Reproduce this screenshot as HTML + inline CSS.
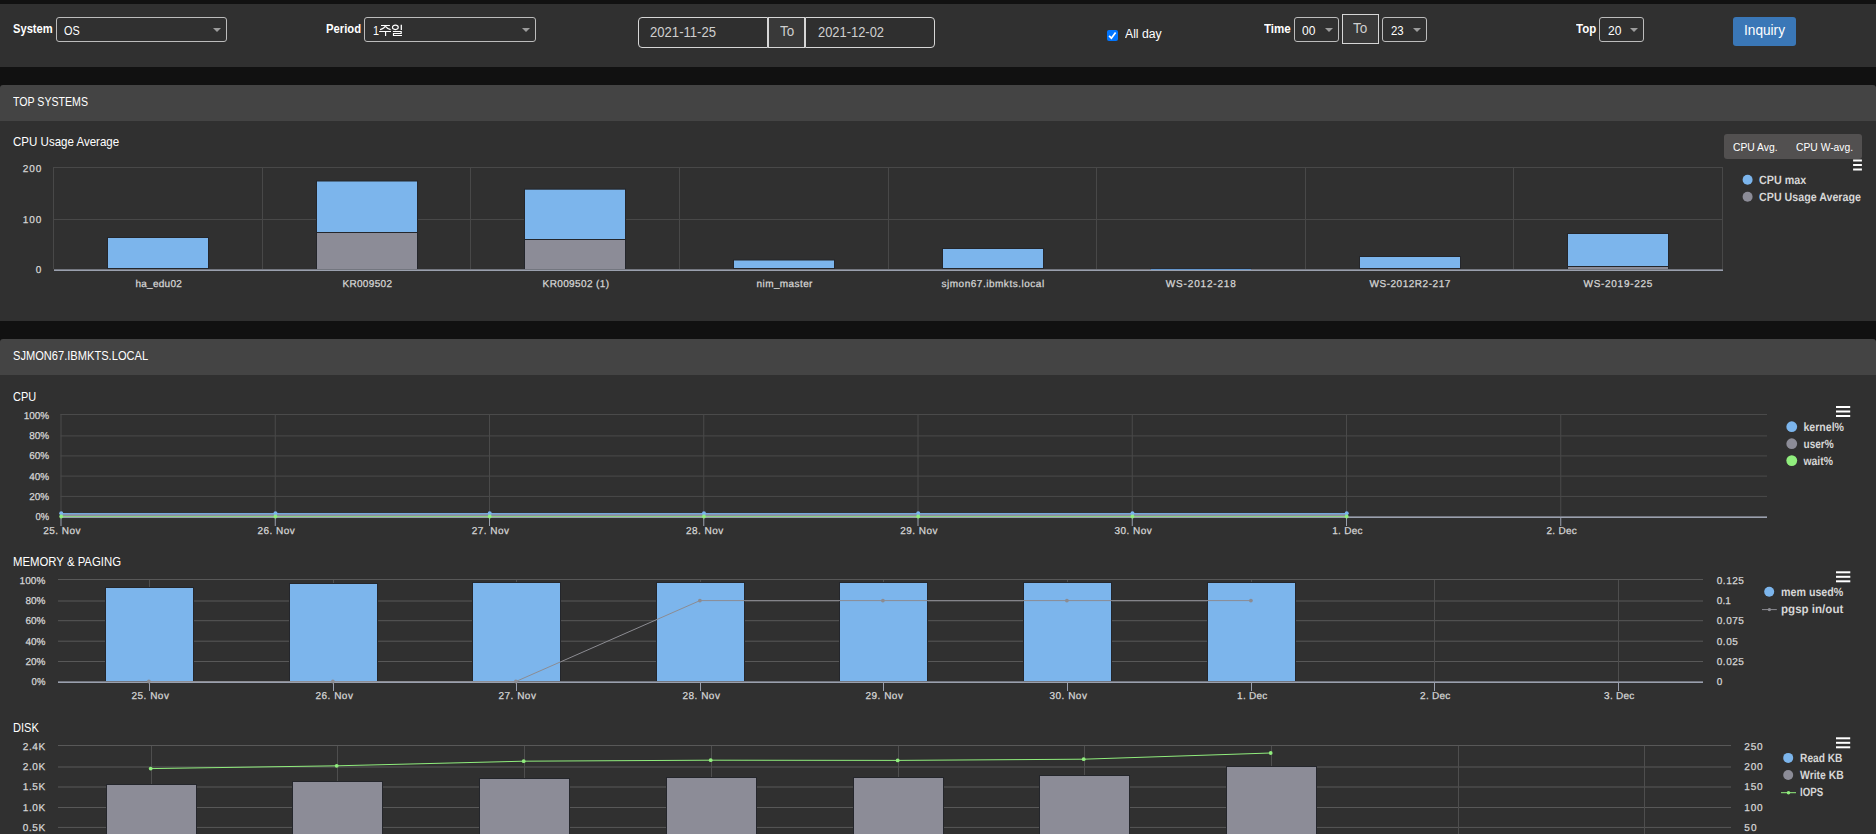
<!DOCTYPE html>
<html lang="en">
<head>
<meta charset="utf-8">
<title>TOP SYSTEMS</title>
<style>
html,body{margin:0;padding:0}
body{width:1876px;height:834px;overflow:hidden;background:#111111;font-family:"Liberation Sans",sans-serif;position:relative;color:#fff}
section,div,span,svg{position:absolute;box-sizing:border-box}
section{left:0;top:0;width:1876px;height:834px}
.t{white-space:pre;line-height:1;transform-origin:0 50%;display:block}
.toolbar{left:0;top:4px;width:1876px;height:63px;background:#303030}
.ph{left:0;width:1876px;height:36px;background:#444444;border-radius:3px 3px 0 0}
.pb{left:0;width:1876px;background:#303030}
.sel{border:1px solid #bcbcbc;border-radius:3px;background:#303030;height:25px;top:17px}
.sel i{position:absolute;right:5px;top:10px;width:0;height:0;border-left:4px solid transparent;border-right:4px solid transparent;border-top:4.5px solid #9c9c9c}
.inp{border:1px solid #d6d6d6;background:#2f2f2f;height:31px;top:17px}
.addon{border:1px solid #d6d6d6;background:#393939}
svg text{font-family:"Liberation Sans",sans-serif;text-rendering:geometricPrecision}
</style>
</head>
<body>

<section aria-label="Search filters">
<div class="toolbar"></div>
<span class="t" style="left:12.5px;top:22px;font-size:13px;color:#fff;font-weight:bold;transform:scaleX(0.8584);">System</span>
<div class="sel" style="left:56px;width:171px"><i></i></div>
<span class="t" style="left:63.9px;top:24.1px;font-size:13px;color:#fff;transform:scaleX(0.8359);">OS</span>
<span class="t" style="left:326px;top:22px;font-size:13px;color:#fff;font-weight:bold;transform:scaleX(0.8652);">Period</span>
<div class="sel" style="left:364px;width:172px"><i></i></div>
<span class="t" style="left:372.6px;top:24.2px;font-size:13px;color:#fff;transform:scaleX(0.8300);">1</span>
<svg style="left:379px;top:24px" width="25" height="13" viewBox="0 0 25 13" fill="none" stroke="#fff" stroke-width="1.15" role="img" aria-label="주일"><title>주일</title>
<path d="M2 1.5H10.9M6.5 1.8Q5.5 4.4 1.1 5.6M6.8 2.6Q8.3 4.7 11.6 5.6M0.1 7.5H12M6.6 7.5V11.9"/>
<ellipse cx="16.35" cy="3.35" rx="2.9" ry="2.2"/>
<path d="M22.3 0.8V5.9" stroke-width="1.3"/><path d="M13.9 7.5H22.2V9.5H14.5V11.5H23"/>
</svg>
<div class="inp" style="left:638px;width:130px;border-radius:4px 0 0 4px"></div>
<div class="addon" style="left:768px;top:17px;width:37px;height:31px"></div>
<div class="inp" style="left:805px;width:130px;border-radius:0 4px 4px 0"></div>
<span class="t" style="left:650px;top:25.15px;font-size:14px;color:#cfcfcf;transform:scaleX(0.9353);">2021-11-25</span>
<span class="t" style="left:779.8px;top:24.15px;font-size:14px;color:#cfcfcf;transform:scaleX(0.9604);">To</span>
<span class="t" style="left:817.5px;top:25.15px;font-size:14px;color:#cfcfcf;transform:scaleX(0.9217);">2021-12-02</span>
<svg style="left:1107px;top:30px" width="11" height="11" viewBox="0 0 11 11"><rect x="0" y="0" width="11" height="11" rx="2" fill="#0075ff"/><path d="M2.1 5.8L4.4 8.2L8.6 2.5" fill="none" stroke="#fff" stroke-width="1.7"/></svg>
<span class="t" style="left:1125.1px;top:27.84px;font-size:12px;color:#fff;transform:scaleX(1.0162);">All day</span>
<span class="t" style="left:1263.7px;top:22px;font-size:13px;color:#fff;font-weight:bold;transform:scaleX(0.8902);">Time</span>
<div class="sel" style="left:1294px;width:45px"><i></i></div>
<span class="t" style="left:1301.8px;top:24px;font-size:13px;color:#fff;transform:scaleX(0.9268);">00</span>
<div class="addon" style="left:1342px;top:14px;width:37px;height:30px"></div>
<span class="t" style="left:1353px;top:21.05px;font-size:14px;color:#cfcfcf;transform:scaleX(0.9672);">To</span>
<div class="sel" style="left:1382px;width:45px"><i></i></div>
<span class="t" style="left:1390.6px;top:24px;font-size:13px;color:#fff;transform:scaleX(0.8784);">23</span>
<span class="t" style="left:1575.8px;top:22px;font-size:13px;color:#fff;font-weight:bold;transform:scaleX(0.8838);">Top</span>
<div class="sel" style="left:1599px;width:45px"><i></i></div>
<span class="t" style="left:1607.6px;top:24.1px;font-size:13px;color:#fff;transform:scaleX(0.9268);">20</span>
<div style="left:1733px;top:17px;width:63px;height:29px;background:#3a77b7;border-radius:3px"></div>
<span class="t" style="left:1744px;top:23.15px;font-size:14px;color:#fff;transform:scaleX(0.9758);">Inquiry</span>
</section>
<section aria-label="Top systems panel">
<div class="ph" style="top:85px"></div>
<div class="pb" style="top:121px;height:200px"></div>
<span class="t" style="left:13px;top:95px;font-size:13px;color:#fff;transform:scaleX(0.8153);">TOP SYSTEMS</span>
<span class="t" style="left:13px;top:134.9px;font-size:13px;color:#fff;transform:scaleX(0.8871);">CPU Usage Average</span>
<div style="left:1724px;top:134px;width:138px;height:25px;background:#525050;border-radius:3px"></div>
<span class="t" style="left:1733.4px;top:142.27px;font-size:11.5px;color:#fff;transform:scaleX(0.8984);">CPU Avg.</span>
<span class="t" style="left:1795.7px;top:142.27px;font-size:11.5px;color:#fff;transform:scaleX(0.8966);">CPU W-avg.</span>
<svg style="left:0;top:121px" width="1876" height="200" viewBox="0 121 1876 200">
<path d="M53 167.5H1723M53 219.5H1723M53.5 167V269M262.5 167V269M470.5 167V269M679.5 167V269M888.5 167V269M1096.5 167V269M1305.5 167V269M1513.5 167V269M1722.5 167V269" stroke="#484848" stroke-width="1" fill="none"/>
<rect x="107" y="237" width="102" height="32" fill="#24262b"/><rect x="108" y="238" width="100" height="30" fill="#7cb5ec"/>
<rect x="316" y="180.5" width="102" height="52.5" fill="#24262b"/><rect x="317" y="181.5" width="100" height="50.5" fill="#7cb5ec"/>
<rect x="316" y="232" width="102" height="38" fill="#24262b"/><rect x="317" y="233" width="100" height="36" fill="#8c8c97"/>
<rect x="524" y="188.7" width="102" height="51.3" fill="#24262b"/><rect x="525" y="189.7" width="100" height="49.3" fill="#7cb5ec"/>
<rect x="524" y="239" width="102" height="31" fill="#24262b"/><rect x="525" y="240" width="100" height="29" fill="#8c8c97"/>
<rect x="733" y="259.5" width="102" height="9.5" fill="#24262b"/><rect x="734" y="260.5" width="100" height="7.5" fill="#7cb5ec"/>
<rect x="942" y="248" width="102" height="21" fill="#24262b"/><rect x="943" y="249" width="100" height="19" fill="#7cb5ec"/>
<rect x="1359" y="256" width="102" height="13" fill="#24262b"/><rect x="1360" y="257" width="100" height="11" fill="#7cb5ec"/>
<rect x="1567" y="233" width="102" height="34" fill="#24262b"/><rect x="1568" y="234" width="100" height="32" fill="#7cb5ec"/>
<rect x="1567" y="266" width="102" height="4" fill="#24262b"/><rect x="1568" y="267" width="100" height="2" fill="#8c8c97"/>
<rect x="54" y="269" width="1669" height="1" fill="#73767f"/><rect x="54" y="270" width="1669" height="1" fill="#9aa0ae"/>
<rect x="1150" y="268" width="102" height="1" fill="#282b31"/><rect x="1151" y="269" width="100" height="1" fill="#6496cc"/>
<text x="158.6" y="287" font-size="10" fill="#d6d6d6" stroke="#d6d6d6" stroke-width="0.25" text-anchor="middle" textLength="46.4" lengthAdjust="spacing">ha_edu02</text>
<text x="367.2" y="287" font-size="10" fill="#d6d6d6" stroke="#d6d6d6" stroke-width="0.25" text-anchor="middle" textLength="49.6" lengthAdjust="spacing">KR009502</text>
<text x="575.8" y="287" font-size="10" fill="#d6d6d6" stroke="#d6d6d6" stroke-width="0.25" text-anchor="middle" textLength="66.4" lengthAdjust="spacing">KR009502 (1)</text>
<text x="784.5" y="287" font-size="10" fill="#d6d6d6" stroke="#d6d6d6" stroke-width="0.25" text-anchor="middle" textLength="55.9" lengthAdjust="spacing">nim_master</text>
<text x="992.8" y="287" font-size="10" fill="#d6d6d6" stroke="#d6d6d6" stroke-width="0.25" text-anchor="middle" textLength="102.7" lengthAdjust="spacing">sjmon67.ibmkts.local</text>
<text x="1200.8" y="287" font-size="10" fill="#d6d6d6" stroke="#d6d6d6" stroke-width="0.25" text-anchor="middle" textLength="70" lengthAdjust="spacing">WS-2012-218</text>
<text x="1409.9" y="287" font-size="10" fill="#d6d6d6" stroke="#d6d6d6" stroke-width="0.25" text-anchor="middle" textLength="80.8" lengthAdjust="spacing">WS-2012R2-217</text>
<text x="1617.9" y="287" font-size="10" fill="#d6d6d6" stroke="#d6d6d6" stroke-width="0.25" text-anchor="middle" textLength="68.7" lengthAdjust="spacing">WS-2019-225</text>
<text x="41.3" y="172.1" font-size="10" fill="#d6d6d6" stroke="#d6d6d6" stroke-width="0.25" text-anchor="end" textLength="18.6" lengthAdjust="spacing">200</text>
<text x="41.3" y="223.3" font-size="10" fill="#d6d6d6" stroke="#d6d6d6" stroke-width="0.25" text-anchor="end" textLength="18.6" lengthAdjust="spacing">100</text>
<text x="41.3" y="273.2" font-size="10" fill="#d6d6d6" stroke="#d6d6d6" stroke-width="0.25" text-anchor="end" textLength="6" lengthAdjust="spacing">0</text>
<rect x="1853.1" y="159.5" width="8.8" height="2" fill="#fff"/><rect x="1853.1" y="164" width="8.8" height="2" fill="#fff"/><rect x="1853.1" y="168.5" width="8.8" height="2" fill="#fff"/>
<circle cx="1747.6" cy="179.8" r="5" fill="#7cb5ec"/>
<text x="1759.1" y="184" font-size="12" fill="#d6d6d6" font-weight="bold" textLength="47.2" lengthAdjust="spacingAndGlyphs">CPU max</text>
<circle cx="1747.6" cy="196.8" r="5" fill="#8c8c97"/>
<text x="1759.1" y="201" font-size="12" fill="#d6d6d6" font-weight="bold" textLength="101.8" lengthAdjust="spacingAndGlyphs">CPU Usage Average</text>
</svg>
</section>
<section aria-label="System detail panel">
<div class="ph" style="top:339px"></div>
<div class="pb" style="top:375px;height:470px"></div>
<span class="t" style="left:13px;top:349px;font-size:13px;color:#fff;transform:scaleX(0.8540);">SJMON67.IBMKTS.LOCAL</span>
<span class="t" style="left:13px;top:389.7px;font-size:13px;color:#fff;transform:scaleX(0.8452);">CPU</span>
<span class="t" style="left:13.3px;top:555px;font-size:13px;color:#fff;transform:scaleX(0.8743);">MEMORY &amp; PAGING</span>
<span class="t" style="left:13.3px;top:721px;font-size:13px;color:#fff;transform:scaleX(0.8503);">DISK</span>
<svg style="left:0;top:403px" width="1876" height="140" viewBox="0 403 1876 140">
<path d="M60.5 414.5H1767M60.5 435.9H1767M60.5 455.9H1767M60.5 476.1H1767M60.5 496.4H1767M61 414V516M275.25 414V516M489.5 414V516M703.75 414V516M918 414V516M1132.25 414V516M1346.5 414V516M1560.75 414V516" stroke="#4a4a4a" stroke-width="1" fill="none"/>
<rect x="61" y="516" width="1706" height="1" fill="#73767f"/><rect x="61" y="517" width="1706" height="1" fill="#9aa0ae"/>
<path d="M61 518V526M275.25 518V526M489.5 518V526M703.75 518V526M918 518V526M1132.25 518V526M1346.5 518V526M1560.75 518V526" stroke="#9aa0ae" stroke-width="1" fill="none"/>
<rect x="61" y="513" width="1285.5" height="1" fill="#74a7dc"/>
<rect x="61" y="514" width="1285.5" height="1" fill="#8496b4"/>
<rect x="61" y="515" width="1285.5" height="1" fill="#8e8e98"/>
<rect x="61" y="516" width="1285.5" height="1" fill="#8bd183"/>
<circle cx="61.2" cy="513.2" r="2" fill="#7cb5ec"/>
<circle cx="275.45" cy="513.2" r="2" fill="#7cb5ec"/>
<circle cx="489.7" cy="513.2" r="2" fill="#7cb5ec"/>
<circle cx="703.95" cy="513.2" r="2" fill="#7cb5ec"/>
<circle cx="918.2" cy="513.2" r="2" fill="#7cb5ec"/>
<circle cx="1132.45" cy="513.2" r="2" fill="#7cb5ec"/>
<circle cx="1346.7" cy="513.2" r="2" fill="#7cb5ec"/>
<circle cx="61.2" cy="516.5" r="1.9" fill="#90ed7d"/>
<circle cx="275.45" cy="516.5" r="1.9" fill="#90ed7d"/>
<circle cx="489.7" cy="516.5" r="1.9" fill="#90ed7d"/>
<circle cx="703.95" cy="516.5" r="1.9" fill="#90ed7d"/>
<circle cx="918.2" cy="516.5" r="1.9" fill="#90ed7d"/>
<circle cx="1132.45" cy="516.5" r="1.9" fill="#90ed7d"/>
<circle cx="1346.7" cy="516.5" r="1.9" fill="#90ed7d"/>
<text x="49.2" y="419" font-size="10" fill="#d6d6d6" stroke="#d6d6d6" stroke-width="0.25" text-anchor="end" textLength="25.4" lengthAdjust="spacingAndGlyphs">100%</text>
<text x="49.2" y="439" font-size="10" fill="#d6d6d6" stroke="#d6d6d6" stroke-width="0.25" text-anchor="end" textLength="19.9" lengthAdjust="spacingAndGlyphs">80%</text>
<text x="49.2" y="459" font-size="10" fill="#d6d6d6" stroke="#d6d6d6" stroke-width="0.25" text-anchor="end" textLength="19.9" lengthAdjust="spacingAndGlyphs">60%</text>
<text x="49.2" y="480" font-size="10" fill="#d6d6d6" stroke="#d6d6d6" stroke-width="0.25" text-anchor="end" textLength="19.9" lengthAdjust="spacingAndGlyphs">40%</text>
<text x="49.2" y="500" font-size="10" fill="#d6d6d6" stroke="#d6d6d6" stroke-width="0.25" text-anchor="end" textLength="19.9" lengthAdjust="spacingAndGlyphs">20%</text>
<text x="49.2" y="520" font-size="10" fill="#d6d6d6" stroke="#d6d6d6" stroke-width="0.25" text-anchor="end" textLength="13.6" lengthAdjust="spacingAndGlyphs">0%</text>
<text x="61.9" y="534" font-size="10" fill="#d6d6d6" stroke="#d6d6d6" stroke-width="0.25" text-anchor="middle" textLength="37.4" lengthAdjust="spacing">25. Nov</text>
<text x="276.15" y="534" font-size="10" fill="#d6d6d6" stroke="#d6d6d6" stroke-width="0.25" text-anchor="middle" textLength="37.4" lengthAdjust="spacing">26. Nov</text>
<text x="490.4" y="534" font-size="10" fill="#d6d6d6" stroke="#d6d6d6" stroke-width="0.25" text-anchor="middle" textLength="37.4" lengthAdjust="spacing">27. Nov</text>
<text x="704.65" y="534" font-size="10" fill="#d6d6d6" stroke="#d6d6d6" stroke-width="0.25" text-anchor="middle" textLength="37.4" lengthAdjust="spacing">28. Nov</text>
<text x="918.9" y="534" font-size="10" fill="#d6d6d6" stroke="#d6d6d6" stroke-width="0.25" text-anchor="middle" textLength="37.4" lengthAdjust="spacing">29. Nov</text>
<text x="1133.15" y="534" font-size="10" fill="#d6d6d6" stroke="#d6d6d6" stroke-width="0.25" text-anchor="middle" textLength="37.4" lengthAdjust="spacing">30. Nov</text>
<text x="1347.4" y="534" font-size="10" fill="#d6d6d6" stroke="#d6d6d6" stroke-width="0.25" text-anchor="middle" textLength="30.2" lengthAdjust="spacing">1. Dec</text>
<text x="1561.65" y="534" font-size="10" fill="#d6d6d6" stroke="#d6d6d6" stroke-width="0.25" text-anchor="middle" textLength="30.2" lengthAdjust="spacing">2. Dec</text>
<rect x="1836" y="406" width="14.2" height="2" fill="#fff"/><rect x="1836" y="410.5" width="14.2" height="2" fill="#fff"/><rect x="1836" y="415" width="14.2" height="2" fill="#fff"/>
<circle cx="1791.75" cy="426.7" r="5.4" fill="#7cb5ec"/>
<text x="1803.5" y="431" font-size="12" fill="#d6d6d6" font-weight="bold" textLength="40.5" lengthAdjust="spacingAndGlyphs">kernel%</text>
<circle cx="1791.75" cy="443.7" r="5.4" fill="#8c8c97"/>
<text x="1803.5" y="448" font-size="12" fill="#d6d6d6" font-weight="bold" textLength="30.2" lengthAdjust="spacingAndGlyphs">user%</text>
<circle cx="1791.75" cy="460.6" r="5.4" fill="#90ed7d"/>
<text x="1803.5" y="465" font-size="12" fill="#d6d6d6" font-weight="bold" textLength="29.4" lengthAdjust="spacingAndGlyphs">wait%</text>
</svg>
<svg style="left:0;top:568px" width="1876" height="140" viewBox="0 568 1876 140">
<path d="M58 579.5H1703M58 601H1703M58 620.7H1703M58 641.2H1703M58 661.5H1703" stroke="#585858" stroke-width="1" fill="none"/>
<path d="M149.5 580V682M333.5 580V682M516.5 580V682M700.5 580V682M883.5 580V682M1067.5 580V682M1251.5 580V682M1434.5 580V682M1618.5 580V682" stroke="#4e4e4e" stroke-width="1" fill="none"/>
<rect x="105" y="587" width="89" height="95" fill="#24262b"/><rect x="106" y="588" width="87" height="93" fill="#7cb5ec"/>
<rect x="289" y="583" width="89" height="99" fill="#24262b"/><rect x="290" y="584" width="87" height="97" fill="#7cb5ec"/>
<rect x="472" y="582" width="89" height="100" fill="#24262b"/><rect x="473" y="583" width="87" height="98" fill="#7cb5ec"/>
<rect x="656" y="582" width="89" height="100" fill="#24262b"/><rect x="657" y="583" width="87" height="98" fill="#7cb5ec"/>
<rect x="839" y="582" width="89" height="100" fill="#24262b"/><rect x="840" y="583" width="87" height="98" fill="#7cb5ec"/>
<rect x="1023" y="582" width="89" height="100" fill="#24262b"/><rect x="1024" y="583" width="87" height="98" fill="#7cb5ec"/>
<rect x="1207" y="582" width="89" height="100" fill="#24262b"/><rect x="1208" y="583" width="87" height="98" fill="#7cb5ec"/>
<rect x="58" y="681" width="1645" height="1" fill="#73767f"/><rect x="58" y="682" width="1645" height="1" fill="#9aa0ae"/>
<path d="M149.5 683V691M333.5 683V691M516.5 683V691M700.5 683V691M883.5 683V691M1067.5 683V691M1251.5 683V691M1434.5 683V691M1618.5 683V691" stroke="#9aa0ae" stroke-width="1" fill="none"/>
<path d="M148.9 681.5 L332.9 681.5 L515.9 681.5 L699.9 600.6 L882.9 600.6 L1066.9 600.6 L1250.9 600.6" stroke="#8c8c92" stroke-width="1" fill="none"/>
<circle cx="148.9" cy="681.5" r="1.9" fill="#8c8c92"/>
<circle cx="332.9" cy="681.5" r="1.9" fill="#8c8c92"/>
<circle cx="515.9" cy="681.5" r="1.9" fill="#8c8c92"/>
<circle cx="699.9" cy="600.6" r="1.9" fill="#8c8c92"/>
<circle cx="882.9" cy="600.6" r="1.9" fill="#8c8c92"/>
<circle cx="1066.9" cy="600.6" r="1.9" fill="#8c8c92"/>
<circle cx="1250.9" cy="600.6" r="1.9" fill="#8c8c92"/>
<text x="45.4" y="584" font-size="10" fill="#d6d6d6" stroke="#d6d6d6" stroke-width="0.25" text-anchor="end" textLength="25.9" lengthAdjust="spacing">100%</text>
<text x="45.4" y="604" font-size="10" fill="#d6d6d6" stroke="#d6d6d6" stroke-width="0.25" text-anchor="end">80%</text>
<text x="45.4" y="624" font-size="10" fill="#d6d6d6" stroke="#d6d6d6" stroke-width="0.25" text-anchor="end">60%</text>
<text x="45.4" y="645" font-size="10" fill="#d6d6d6" stroke="#d6d6d6" stroke-width="0.25" text-anchor="end">40%</text>
<text x="45.4" y="665" font-size="10" fill="#d6d6d6" stroke="#d6d6d6" stroke-width="0.25" text-anchor="end">20%</text>
<text x="45.4" y="685" font-size="10" fill="#d6d6d6" stroke="#d6d6d6" stroke-width="0.25" text-anchor="end" textLength="13.8" lengthAdjust="spacingAndGlyphs">0%</text>
<text x="1716.8" y="584" font-size="10" fill="#d6d6d6" stroke="#d6d6d6" stroke-width="0.25" textLength="27" lengthAdjust="spacing">0.125</text>
<text x="1716.8" y="604" font-size="10" fill="#d6d6d6" stroke="#d6d6d6" stroke-width="0.25" textLength="14" lengthAdjust="spacing">0.1</text>
<text x="1716.8" y="624" font-size="10" fill="#d6d6d6" stroke="#d6d6d6" stroke-width="0.25" textLength="27" lengthAdjust="spacing">0.075</text>
<text x="1716.8" y="645" font-size="10" fill="#d6d6d6" stroke="#d6d6d6" stroke-width="0.25" textLength="21" lengthAdjust="spacing">0.05</text>
<text x="1716.8" y="665" font-size="10" fill="#d6d6d6" stroke="#d6d6d6" stroke-width="0.25" textLength="27" lengthAdjust="spacing">0.025</text>
<text x="1716.8" y="685" font-size="10" fill="#d6d6d6" stroke="#d6d6d6" stroke-width="0.25" textLength="6" lengthAdjust="spacing">0</text>
<text x="150.2" y="699" font-size="10" fill="#d6d6d6" stroke="#d6d6d6" stroke-width="0.25" text-anchor="middle" textLength="37.4" lengthAdjust="spacing">25. Nov</text>
<text x="334.2" y="699" font-size="10" fill="#d6d6d6" stroke="#d6d6d6" stroke-width="0.25" text-anchor="middle" textLength="37.4" lengthAdjust="spacing">26. Nov</text>
<text x="517.2" y="699" font-size="10" fill="#d6d6d6" stroke="#d6d6d6" stroke-width="0.25" text-anchor="middle" textLength="37.4" lengthAdjust="spacing">27. Nov</text>
<text x="701.2" y="699" font-size="10" fill="#d6d6d6" stroke="#d6d6d6" stroke-width="0.25" text-anchor="middle" textLength="37.4" lengthAdjust="spacing">28. Nov</text>
<text x="884.2" y="699" font-size="10" fill="#d6d6d6" stroke="#d6d6d6" stroke-width="0.25" text-anchor="middle" textLength="37.4" lengthAdjust="spacing">29. Nov</text>
<text x="1068.2" y="699" font-size="10" fill="#d6d6d6" stroke="#d6d6d6" stroke-width="0.25" text-anchor="middle" textLength="37.4" lengthAdjust="spacing">30. Nov</text>
<text x="1252.2" y="699" font-size="10" fill="#d6d6d6" stroke="#d6d6d6" stroke-width="0.25" text-anchor="middle" textLength="30.2" lengthAdjust="spacing">1. Dec</text>
<text x="1435.2" y="699" font-size="10" fill="#d6d6d6" stroke="#d6d6d6" stroke-width="0.25" text-anchor="middle" textLength="30.2" lengthAdjust="spacing">2. Dec</text>
<text x="1619.2" y="699" font-size="10" fill="#d6d6d6" stroke="#d6d6d6" stroke-width="0.25" text-anchor="middle" textLength="30.2" lengthAdjust="spacing">3. Dec</text>
<rect x="1836" y="571.3" width="14.3" height="2" fill="#fff"/><rect x="1836" y="575.8" width="14.3" height="2" fill="#fff"/><rect x="1836" y="580.3" width="14.3" height="2" fill="#fff"/>
<circle cx="1769.2" cy="591.8" r="5" fill="#7cb5ec"/>
<text x="1781" y="596" font-size="12" fill="#d6d6d6" font-weight="bold" textLength="62.3" lengthAdjust="spacingAndGlyphs">mem used%</text>
<path d="M1762 609.6H1776.8" stroke="#8c8c92" stroke-width="1"/><circle cx="1769.4" cy="609.6" r="1.7" fill="#8c8c92"/>
<text x="1781" y="613" font-size="12" fill="#d6d6d6" font-weight="bold" textLength="62.3" lengthAdjust="spacingAndGlyphs">pgsp in/out</text>
</svg>
<svg style="left:0;top:734px" width="1876" height="100" viewBox="0 734 1876 100">
<path d="M58 745.5H1731M58 767H1731M58 787H1731M58 807.5H1731M58 827.4H1731" stroke="#585858" stroke-width="1" fill="none"/>
<path d="M151.5 746V840M337.5 746V840M524.5 746V840M711.5 746V840M898.5 746V840M1084.5 746V840M1271.5 746V840M1458.5 746V840M1644.5 746V840" stroke="#4e4e4e" stroke-width="1" fill="none"/>
<rect x="106" y="784" width="91" height="67" fill="#24262b"/><rect x="107" y="785" width="89" height="65" fill="#8c8c97"/>
<rect x="292" y="781" width="91" height="70" fill="#24262b"/><rect x="293" y="782" width="89" height="68" fill="#8c8c97"/>
<rect x="479" y="778" width="91" height="73" fill="#24262b"/><rect x="480" y="779" width="89" height="71" fill="#8c8c97"/>
<rect x="666" y="777" width="91" height="74" fill="#24262b"/><rect x="667" y="778" width="89" height="72" fill="#8c8c97"/>
<rect x="853" y="777" width="91" height="74" fill="#24262b"/><rect x="854" y="778" width="89" height="72" fill="#8c8c97"/>
<rect x="1039" y="775" width="91" height="76" fill="#24262b"/><rect x="1040" y="776" width="89" height="74" fill="#8c8c97"/>
<rect x="1226" y="766" width="91" height="85" fill="#24262b"/><rect x="1227" y="767" width="89" height="83" fill="#8c8c97"/>
<path d="M150.7 768.6 L336.7 765.8 L523.7 761.2 L710.7 760.2 L897.7 760.4 L1083.7 759.2 L1270.7 753" stroke="#90ed7d" stroke-width="1" fill="none"/>
<circle cx="150.7" cy="768.6" r="1.9" fill="#90ed7d"/>
<circle cx="336.7" cy="765.8" r="1.9" fill="#90ed7d"/>
<circle cx="523.7" cy="761.2" r="1.9" fill="#90ed7d"/>
<circle cx="710.7" cy="760.2" r="1.9" fill="#90ed7d"/>
<circle cx="897.7" cy="760.4" r="1.9" fill="#90ed7d"/>
<circle cx="1083.7" cy="759.2" r="1.9" fill="#90ed7d"/>
<circle cx="1270.7" cy="753" r="1.9" fill="#90ed7d"/>
<text x="45.2" y="750" font-size="10" fill="#d6d6d6" stroke="#d6d6d6" stroke-width="0.25" text-anchor="end" textLength="22.4" lengthAdjust="spacing">2.4K</text>
<text x="45.2" y="770" font-size="10" fill="#d6d6d6" stroke="#d6d6d6" stroke-width="0.25" text-anchor="end" textLength="22.4" lengthAdjust="spacing">2.0K</text>
<text x="45.2" y="790" font-size="10" fill="#d6d6d6" stroke="#d6d6d6" stroke-width="0.25" text-anchor="end" textLength="22.4" lengthAdjust="spacing">1.5K</text>
<text x="45.2" y="811" font-size="10" fill="#d6d6d6" stroke="#d6d6d6" stroke-width="0.25" text-anchor="end" textLength="22.4" lengthAdjust="spacing">1.0K</text>
<text x="45.2" y="831" font-size="10" fill="#d6d6d6" stroke="#d6d6d6" stroke-width="0.25" text-anchor="end" textLength="22.4" lengthAdjust="spacing">0.5K</text>
<text x="1744.3" y="750" font-size="10" fill="#d6d6d6" stroke="#d6d6d6" stroke-width="0.25" textLength="18.3" lengthAdjust="spacing">250</text>
<text x="1744.3" y="770" font-size="10" fill="#d6d6d6" stroke="#d6d6d6" stroke-width="0.25" textLength="18.3" lengthAdjust="spacing">200</text>
<text x="1744.3" y="790" font-size="10" fill="#d6d6d6" stroke="#d6d6d6" stroke-width="0.25" textLength="18.3" lengthAdjust="spacing">150</text>
<text x="1744.3" y="811" font-size="10" fill="#d6d6d6" stroke="#d6d6d6" stroke-width="0.25" textLength="18.3" lengthAdjust="spacing">100</text>
<text x="1744.3" y="831" font-size="10" fill="#d6d6d6" stroke="#d6d6d6" stroke-width="0.25" textLength="12.2" lengthAdjust="spacing">50</text>
<rect x="1836" y="737.3" width="14.2" height="2" fill="#fff"/><rect x="1836" y="741.8" width="14.2" height="2" fill="#fff"/><rect x="1836" y="746.3" width="14.2" height="2" fill="#fff"/>
<circle cx="1788.2" cy="757.9" r="5" fill="#7cb5ec"/>
<text x="1800.1" y="762" font-size="12" fill="#d6d6d6" font-weight="bold" textLength="42.3" lengthAdjust="spacingAndGlyphs">Read KB</text>
<circle cx="1788.2" cy="775" r="5" fill="#8c8c97"/>
<text x="1800.1" y="779" font-size="12" fill="#d6d6d6" font-weight="bold" textLength="43.6" lengthAdjust="spacingAndGlyphs">Write KB</text>
<path d="M1781 792.7H1796" stroke="#90ed7d" stroke-width="1"/><circle cx="1788.5" cy="792.7" r="1.8" fill="#90ed7d"/>
<text x="1800.1" y="796" font-size="12" fill="#d6d6d6" font-weight="bold" textLength="23.1" lengthAdjust="spacingAndGlyphs">IOPS</text>
</svg>
</section>
</body>
</html>
